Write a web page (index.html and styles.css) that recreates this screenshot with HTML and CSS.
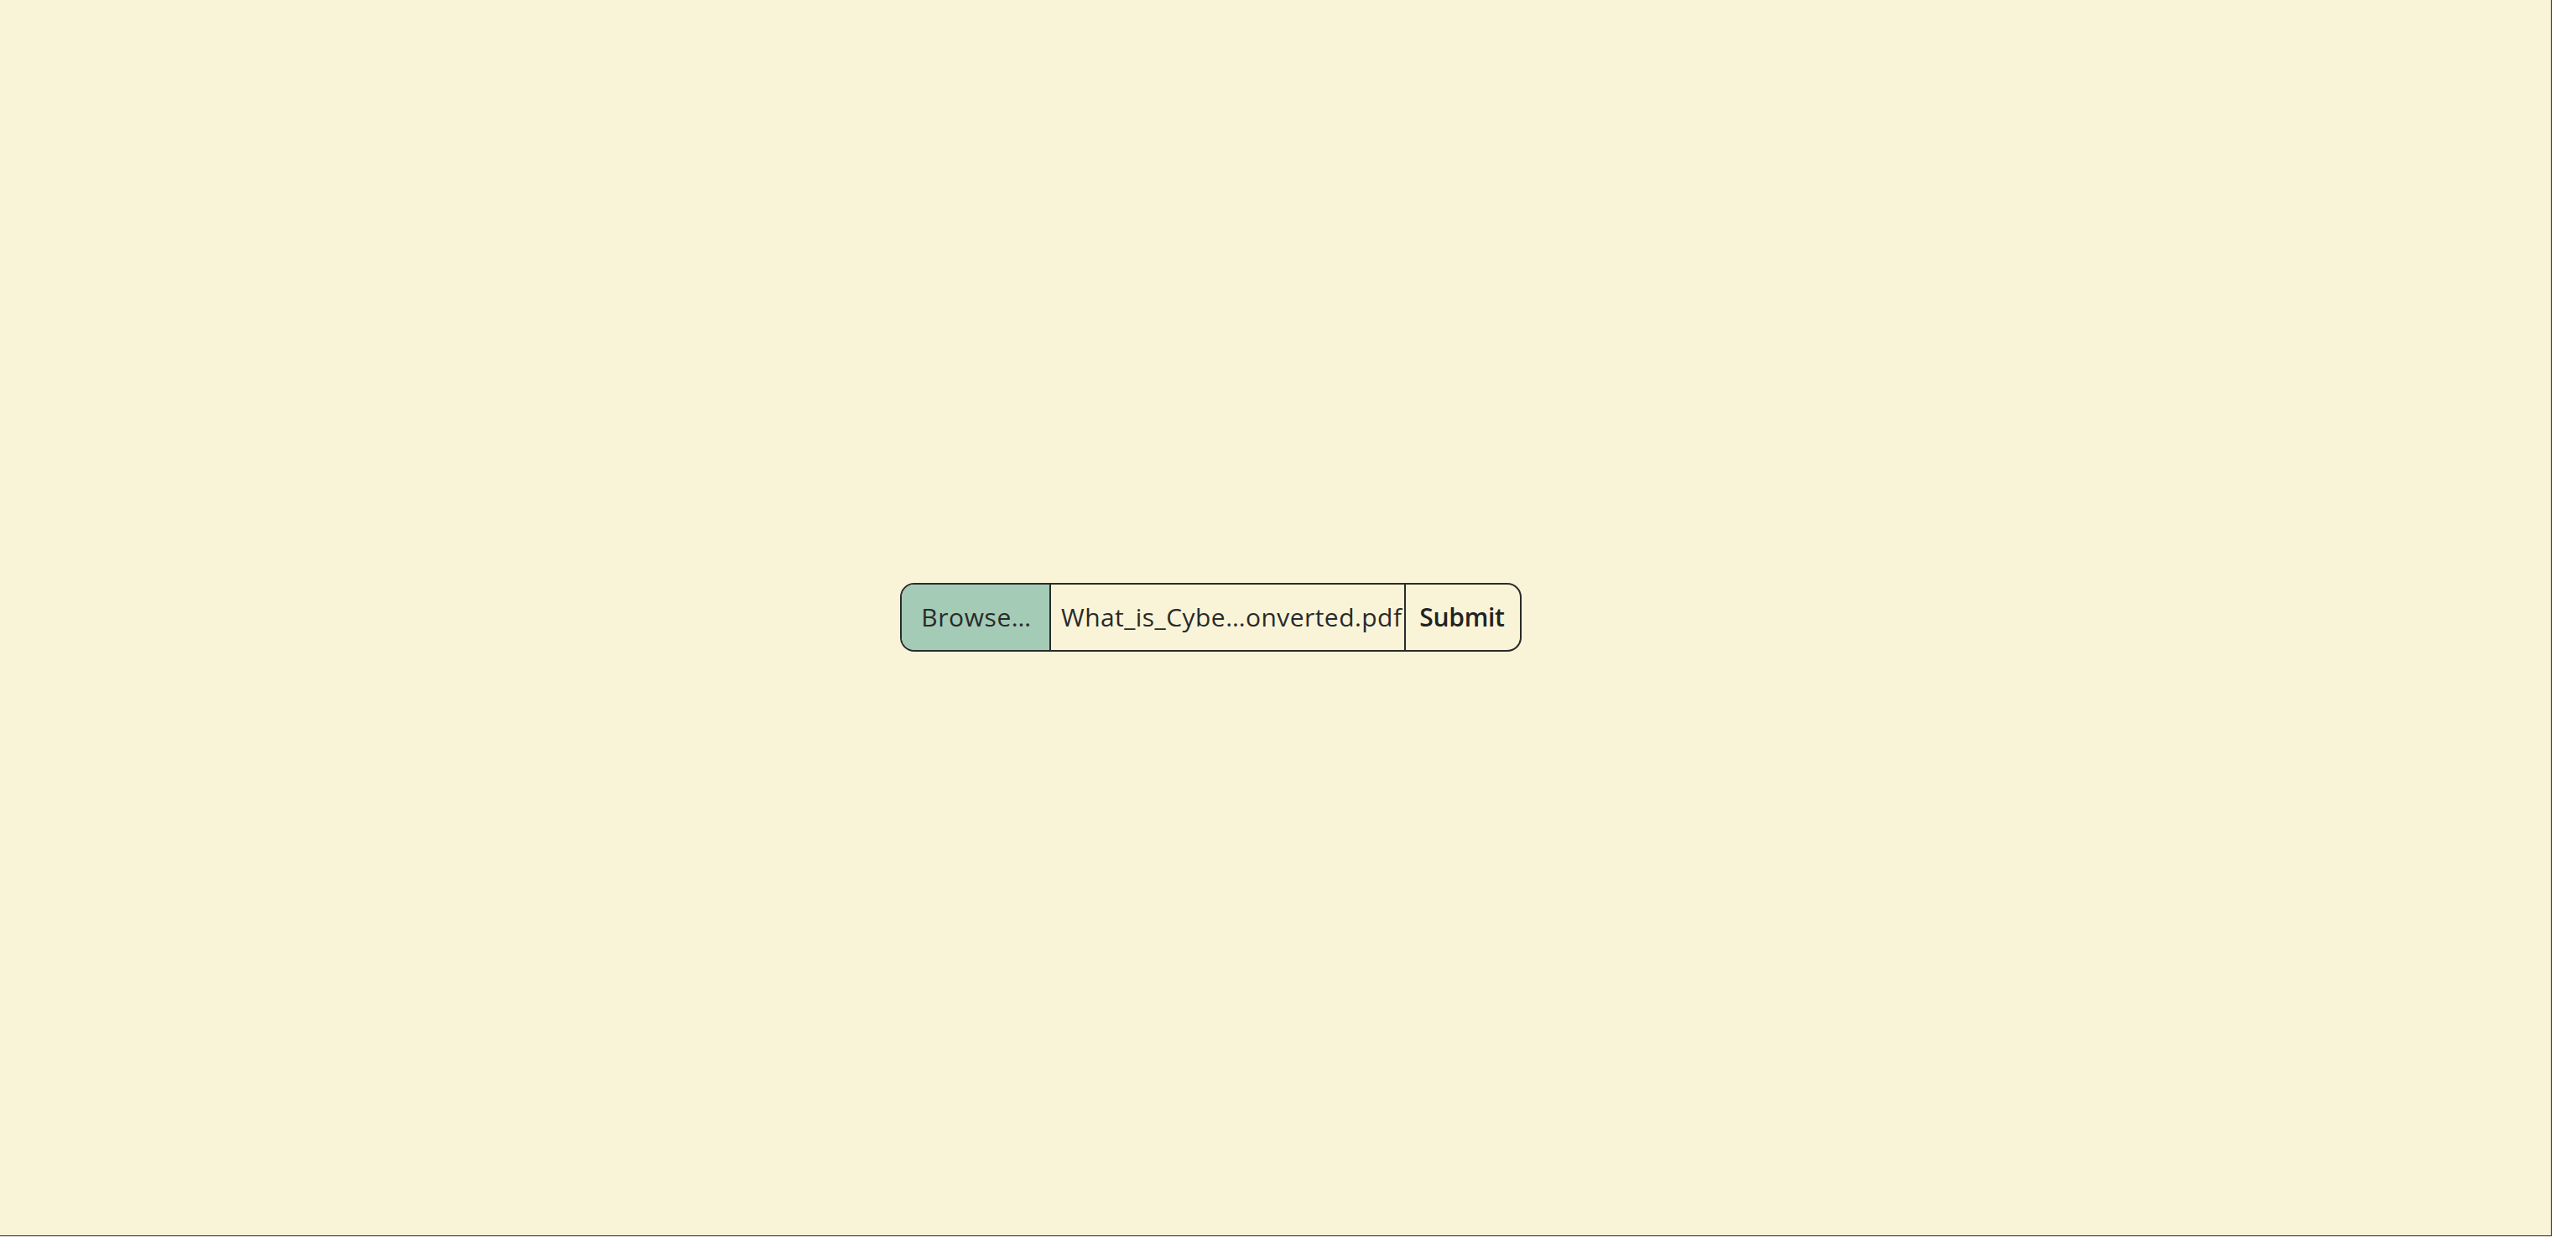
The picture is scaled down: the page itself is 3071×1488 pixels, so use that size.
FILE: index.html
```html
<!DOCTYPE html>
<html>
<head>
<meta charset="utf-8">
<link rel="stylesheet" href="styles.css">
</head>
<body>
<div class="page">
  <form class="upload">
    <div class="browse">Browse…</div>
    <div class="filename">What_is_Cybe…onverted.pdf</div>
    <div class="submit">Submit</div>
  </form>
</div>
</body>
</html>
```
FILE: styles.css
```css
html, body {
  margin: 0;
  padding: 0;
  background: #ffffff;
}
.page {
  box-sizing: border-box;
  width: 3042px;
  height: 1474px;
  background: #f9f4d8;
  border-right: 1px solid #222;
  border-bottom: 1px solid #222;
  display: flex;
  align-items: center;
  padding-left: 1073px;
  padding-bottom: 2px;
}
.upload {
  display: flex;
  height: 82px;
  box-sizing: border-box;
  border: 2px solid #2b2b2b;
  border-radius: 17px;
  overflow: hidden;
  font-family: "Open Sans", "Noto Sans", sans-serif;
  font-size: 30px;
  color: #2a2a2a;
  margin: 0;
}
.upload > div {
  display: flex;
  align-items: center;
  box-sizing: border-box;
}
.browse {
  width: 178px;
  justify-content: center;
  background: #a3cbb6;
  border-right: 2px solid #2b2b2b;
  padding-left: 2px;
  letter-spacing: 0.6px;
}
.filename {
  width: 423px;
  padding-left: 12px;
  border-right: 2px solid #2b2b2b;
  white-space: nowrap;
  letter-spacing: 0.45px;
}
.submit {
  width: 136px;
  justify-content: center;
  font-weight: 600;
  padding-right: 2px;
  letter-spacing: -0.3px;
  color: #222;
}
```
